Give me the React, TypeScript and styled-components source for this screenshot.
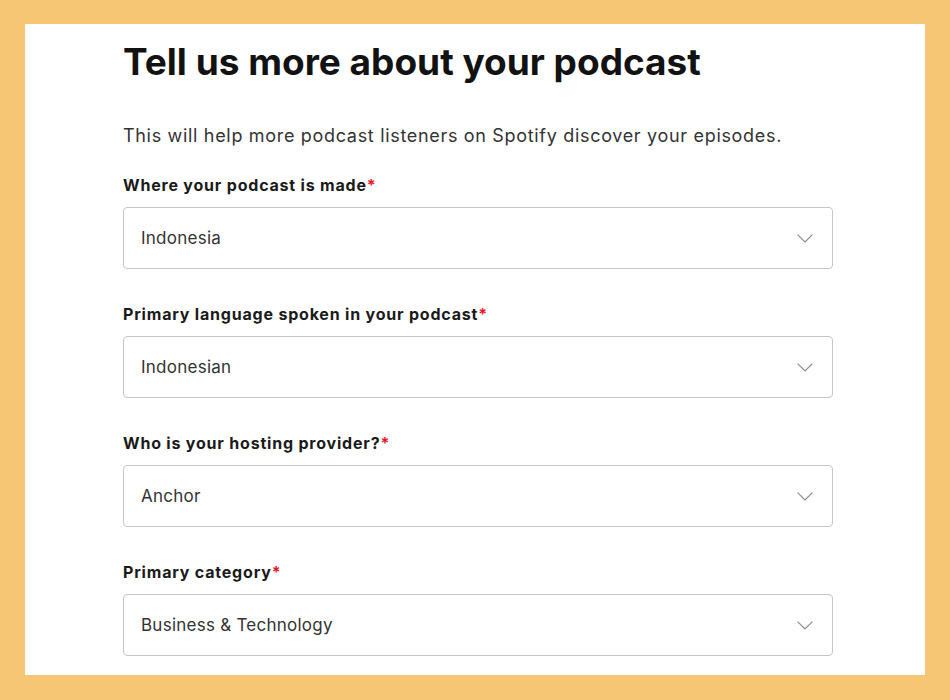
import styled, { createGlobalStyle } from 'styled-components'

interface IField {
    label: string
    value: string
}

const fields: IField[] = [
    { label: 'Where your podcast is made', value: 'Indonesia' },
    { label: 'Primary language spoken in your podcast', value: 'Indonesian' },
    { label: 'Who is your hosting provider?', value: 'Anchor' },
    { label: 'Primary category', value: 'Business & Technology' },
]

const Chevron = () => (
    <svg width="16" height="9" viewBox="0 0 16 9" fill="none">
        <polyline points="0.6,0.6 8,8 15.4,0.6" stroke="#8c8c8c" strokeWidth="1.2" />
    </svg>
)

const App: React.FC = () => {
    return (
        <>
            <GlobalStyle />
            <Frame>
                <Panel>
                    <Content>
                        <Title>Tell us more about your podcast</Title>
                        <Intro>This will help more podcast listeners on Spotify discover your episodes.</Intro>
                        {fields.map(({ label, value }) => (
                            <Field key={label}>
                                <Label>
                                    {label}
                                    <Required>*</Required>
                                </Label>
                                <Select>
                                    <span>{value}</span>
                                    <Chevron />
                                </Select>
                            </Field>
                        ))}
                    </Content>
                </Panel>
            </Frame>
        </>
    )
}

const GlobalStyle = createGlobalStyle`
    html, body {
        margin: 0;
        padding: 0;
    }

    body {
        font-family: Inter, "Noto Sans", sans-serif;
    }
`

const Frame = styled.div`
    width: 950px;
    height: 700px;
    box-sizing: border-box;
    padding: 24px 25px 25px 25px;
    background: #f7c674;
`

const Panel = styled.div`
    height: 100%;
    background: #ffffff;
    overflow: hidden;
`

const Content = styled.div`
    width: 710px;
    padding: 16px 0 0 98px;
    display: flex;
    flex-direction: column;
`

const Title = styled.h1`
    margin: 0;
    font-size: 37px;
    line-height: 44px;
    font-weight: 700;
    letter-spacing: 0;
    color: #121212;
`

const Intro = styled.p`
    margin: 40px 0 0 0;
    font-size: 18px;
    line-height: 24px;
    letter-spacing: 0.68px;
    color: #333333;
`

const Field = styled.div`
    margin-top: 35px;
    display: flex;
    flex-direction: column;
    gap: 12px;

    &:first-of-type {
        margin-top: 27px;
    }
`

const Label = styled.label`
    font-size: 16px;
    line-height: 20px;
    font-weight: 700;
    letter-spacing: 0.8px;
    color: #1a1a1a;
`

const Required = styled.span`
    color: #e91429;
`

const Select = styled.div`
    height: 62px;
    box-sizing: border-box;
    border: 1px solid #c6c6c6;
    border-radius: 4px;
    padding: 0 19px 0 17px;
    display: flex;
    align-items: center;
    justify-content: space-between;
    font-size: 17px;
    letter-spacing: 0.25px;
    color: #333333;
`

export default App
